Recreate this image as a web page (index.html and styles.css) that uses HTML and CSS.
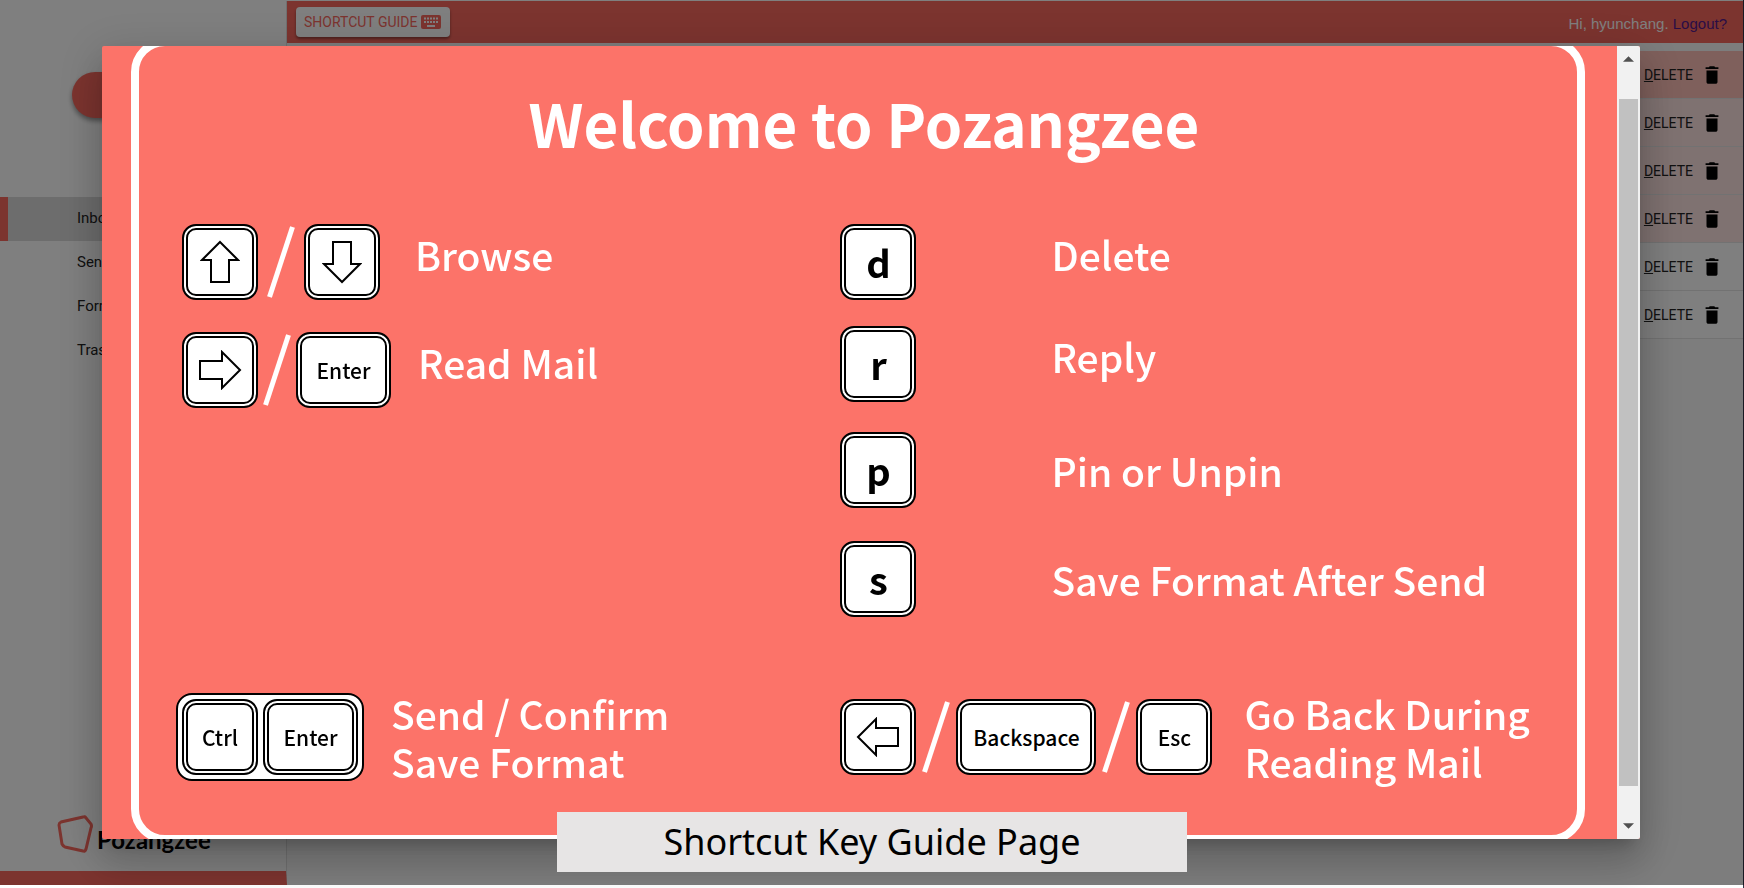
FILE: index.html
```html
<!DOCTYPE html>
<html lang="en">
<head>
<meta charset="utf-8">
<title>Pozangzee</title>
<link rel="stylesheet" href="styles.css">
</head>
<body>
<svg class="defs" aria-hidden="true">
  <symbol id="trash" viewBox="0 0 24 24"><path d="M6 19.500c0 1.100.9 2 2 2h8c1.100 0 2-.9 2-2V7H6v12.500zM19 3.500h-3.500l-1-1h-5l-1 1H5v2h14V3.500z"/></symbol>
  <symbol id="arrow" viewBox="0 0 40 44"><path d="M20 2 L38 20 H29 V42 H11 V20 H2 Z" fill="#fff" stroke="#000" stroke-width="2"/></symbol>
  <symbol id="slash" viewBox="0 0 28 72"><path d="M25.500 1 L2.500 71" stroke="#fff" stroke-width="5"/></symbol>
</svg>
<div class="app">
  <aside class="sidebar">
    <button class="compose" type="button" aria-label="Compose"></button>
    <nav class="folders">
      <a class="folder folder-active" href="#inbox">Inbox</a>
      <a class="folder" href="#sent">Sent</a>
      <a class="folder" href="#format">Format</a>
      <a class="folder" href="#trash-box">Trash</a>
    </nav>
    <div class="brand">
      <svg class="brand-mark" viewBox="0 0 36 40"><path d="M2 10 Q2 8 4 7 L26 2 Q28 1 29 3 L34 9 Q35 11 34 13 L29 34 Q28 37 26 36 L8 32 Q6 31 5 29 Z" fill="none" stroke="#f9685e" stroke-width="3"/></svg>
      <span class="brand-name">Pozangzee</span>
    </div>
  </aside>
  <main class="main">
    <header class="topbar">
      <button class="guide-button" type="button">SHORTCUT GUIDE
        <svg class="keyboard" viewBox="0 0 20 14"><path d="M2 0h16a2 2 0 0 1 2 2v10a2 2 0 0 1-2 2H2a2 2 0 0 1-2-2V2a2 2 0 0 1 2-2z" fill="#f9685e"/><path d="M3 3.500h14M3 7h14" stroke="#fff" stroke-width="2" stroke-dasharray="2 1"/><path d="M6 11h8" stroke="#fff" stroke-width="2"/></svg>
      </button>
      <p class="greeting">Hi, hyunchang. <a class="logout" href="#logout">Logout?</a></p>
    </header>
    <ul class="mails">
      <li class="mail mail-selected"><button class="delete" type="button"><span><u>D</u>ELETE</span><svg class="trash"><use href="#trash"/></svg></button></li>
      <li class="mail mail-pinned"><button class="delete" type="button"><span><u>D</u>ELETE</span><svg class="trash"><use href="#trash"/></svg></button></li>
      <li class="mail mail-pinned"><button class="delete" type="button"><span><u>D</u>ELETE</span><svg class="trash"><use href="#trash"/></svg></button></li>
      <li class="mail mail-pinned"><button class="delete" type="button"><span><u>D</u>ELETE</span><svg class="trash"><use href="#trash"/></svg></button></li>
      <li class="mail"><button class="delete" type="button"><span><u>D</u>ELETE</span><svg class="trash"><use href="#trash"/></svg></button></li>
      <li class="mail"><button class="delete" type="button"><span><u>D</u>ELETE</span><svg class="trash"><use href="#trash"/></svg></button></li>
    </ul>
  </main>
</div>

<div class="overlay">
  <section class="dialog" role="dialog" aria-labelledby="guide-title">
    <div class="pane">
      <div class="frame">
        <h1 class="title" id="guide-title">Welcome to Pozangzee</h1>
        <div class="columns">
          <ul class="list list-left">
            <li class="shortcut">
              <kbd class="key"><svg class="arrow"><use href="#arrow"/></svg></kbd><svg class="slash"><use href="#slash"/></svg><kbd class="key"><svg class="arrow arrow-down"><use href="#arrow"/></svg></kbd>
              <span class="label label-raised label-browse">Browse</span>
            </li>
            <li class="shortcut shortcut-tight">
              <kbd class="key"><svg class="arrow arrow-right"><use href="#arrow"/></svg></kbd><svg class="slash"><use href="#slash"/></svg><kbd class="key key-enter">Enter</kbd>
              <span class="label label-raised label-read">Read Mail</span>
            </li>
          </ul>
          <ul class="list list-right">
            <li class="shortcut"><kbd class="key key-letter">d</kbd><span class="label label-raised label-far">Delete</span></li>
            <li class="shortcut"><kbd class="key key-letter">r</kbd><span class="label label-raised label-far">Reply</span></li>
            <li class="shortcut"><kbd class="key key-letter">p</kbd><span class="label label-far">Pin or Unpin</span></li>
            <li class="shortcut"><kbd class="key key-letter">s</kbd><span class="label label-far">Save Format After Send</span></li>
          </ul>
          <div class="shortcut">
            <span class="combo"><kbd class="key">Ctrl</kbd><kbd class="key key-enter">Enter</kbd></span>
            <span class="label label-combo">Send / Confirm<br>Save Format</span>
          </div>
          <div class="shortcut shortcut-row">
            <kbd class="key"><svg class="arrow arrow-left"><use href="#arrow"/></svg></kbd><svg class="slash"><use href="#slash"/></svg><kbd class="key key-backspace">Backspace</kbd><svg class="slash"><use href="#slash"/></svg><kbd class="key">Esc</kbd>
            <span class="label label-back">Go Back During<br>Reading Mail</span>
          </div>
        </div>
      </div>
    </div>
    <div class="scrollbar" aria-hidden="true">
      <svg class="scroll-arrow" viewBox="0 0 12 6"><path d="M0 6 L6 0 L12 6 Z" fill="#505050"/></svg>
      <div class="scroll-track"><div class="scroll-thumb"></div></div>
      <svg class="scroll-arrow" viewBox="0 0 12 6"><path d="M0 0 L6 6 L12 0 Z" fill="#505050"/></svg>
    </div>
  </section>
</div>
<p class="caption">Shortcut Key Guide Page</p>
</body>
</html>
```
FILE: styles.css
```css
* { box-sizing: border-box; }
body { margin: 0; font-family: Roboto, "Liberation Sans", sans-serif; }
ul, p, h1 { margin: 0; padding: 0; list-style: none; }
button { font: inherit; border: 0; padding: 0; }
.defs { display: none; }

.app { display: flex; height: 100vh; padding: 1px 0 3px; border-right: 1px solid #334; background: #fff; }
.sidebar { display: flex; flex-direction: column; width: 287px; border-right: 1px solid #e0e0e0; border-bottom: 14px solid #f9685e; }
.compose { width: 150px; height: 46px; margin: 71px 0 0 72px; border-radius: 23px; background: #f9685e; box-shadow: 0 3px 5px rgba(0,0,0,.4); }
.folders { margin-top: 79px; }
.folder { display: block; height: 44px; line-height: 43px; padding-left: 77px; font-size: 15px; color: #222; text-decoration: none; }
.folder-active { background: #dadada; border-left: 8px solid #f9685e; padding-left: 69px; }
.brand { display: flex; align-items: flex-end; gap: 4px; margin: auto 0 16px 57px; }
.brand-mark { width: 36px; height: 40px; }
.brand-name { font: 700 24px/30px Lato, sans-serif; color: #000; }

.main { flex: 1; background: #fafafa; }
.topbar { display: flex; justify-content: space-between; align-items: center; height: 42px; padding: 0 16px 0 9px; background: #f9685e; }
.guide-button { display: flex; align-items: center; gap: 4px; height: 30px; padding: 0 9px 0 8px; border-radius: 4px; background: #fff; color: #f9685e; font-size: 14px; box-shadow: 0 2px 3px rgba(0,0,0,.4); }
.keyboard { width: 20px; height: 14px; }
.greeting { padding-top: 4px; font: 15px/20px "Liberation Sans", sans-serif; color: #fff; }
.logout { color: #551a8b; text-decoration: none; }
.mails { margin-top: 8px; }
.mail { display: flex; justify-content: flex-end; align-items: center; height: 48px; padding-right: 20px; border-bottom: 1px solid #e4e4e4; background: #fff; }
.mail-selected { background: #ffc0b8; }
.mail-pinned { background: #ffe4e2; }
.delete { display: flex; align-items: center; gap: 8px; background: none; color: #222; font-size: 14px; }
.trash { width: 22px; height: 24px; }

.overlay { position: fixed; inset: 0 0 3px; display: flex; padding: 46px 104px 46px 102px; background: rgba(0,0,0,.5); }
.dialog { flex: 1; display: flex; overflow: hidden; background: #fc7369; border-radius: 2px; box-shadow: 0 11px 15px -7px rgba(0,0,0,.2), 0 24px 38px 3px rgba(0,0,0,.14), 0 9px 46px 8px rgba(0,0,0,.12); }
.pane { flex: 1; overflow: hidden; padding: 0 32px 0 29px; }
.frame { height: calc(100% + 12px); margin-top: -8px; border: 8px solid #fff; border-radius: 34px; color: #fff; font-family: "Noto Sans CJK KR", sans-serif; }
.title { padding: 36px 0 4px 12px; text-align: center; font-size: 60px; line-height: 80px; font-weight: 700; }
.columns { display: grid; grid-template-columns: 658fr 736fr; row-gap: 72px; padding: 58px 0 0 43px; }
.list { display: grid; align-content: start; }
.list-left { grid-template-rows: 108px 76px; }
.list-right { grid-template-rows: 102px 106px 109px 76px; }
.shortcut { display: flex; align-items: center; align-self: start; gap: 9px; }
.shortcut-tight { gap: 5px; }
.shortcut-row { gap: 6px; }
.key { display: flex; flex: none; align-items: center; justify-content: center; width: 76px; height: 76px; border: 2px solid #000; border-radius: 14px; background: #fff; color: #000; box-shadow: inset 0 0 0 2px #fff, inset 0 0 0 4px #000; font: 500 21px/36px "Noto Sans CJK KR", sans-serif; }
.key-enter { width: 95px; }
.key-backspace { width: 140px; }
.key-letter { font-weight: 700; font-size: 38px; }
.arrow { width: 40px; height: 44px; }
.arrow-down { transform: rotate(180deg); }
.arrow-right { transform: rotate(90deg); }
.arrow-left { transform: rotate(-90deg); }
.slash { flex: none; width: 28px; height: 72px; }
.combo { display: flex; gap: 5px; margin-left: -6px; padding: 4px; border: 2px solid #000; border-radius: 16px; background: #fff; }
.label { font-size: 39px; line-height: 48px; font-weight: 500; white-space: nowrap; }
.label-raised { padding-bottom: 16px; }
.label-browse { margin-left: 26px; }
.label-read { margin-left: 22px; }
.label-far { margin-left: 126px; }
.label-combo { margin-left: 18px; }
.label-back { margin-left: 26px; }

.scrollbar { display: flex; flex-direction: column; align-items: center; width: 23px; padding: 10px 1px; background: #f1f1f1; }
.scroll-arrow { width: 11px; height: 6px; }
.scroll-track { flex: 1; width: 100%; padding: 37px 1px; }
.scroll-thumb { height: 100%; background: #c1c1c1; }

.caption { position: fixed; left: 50%; bottom: 16px; width: 630px; transform: translateX(-50%); background: #e7e5e5; color: #000; text-align: center; font: 36px/60px "Noto Sans", sans-serif; }
```
